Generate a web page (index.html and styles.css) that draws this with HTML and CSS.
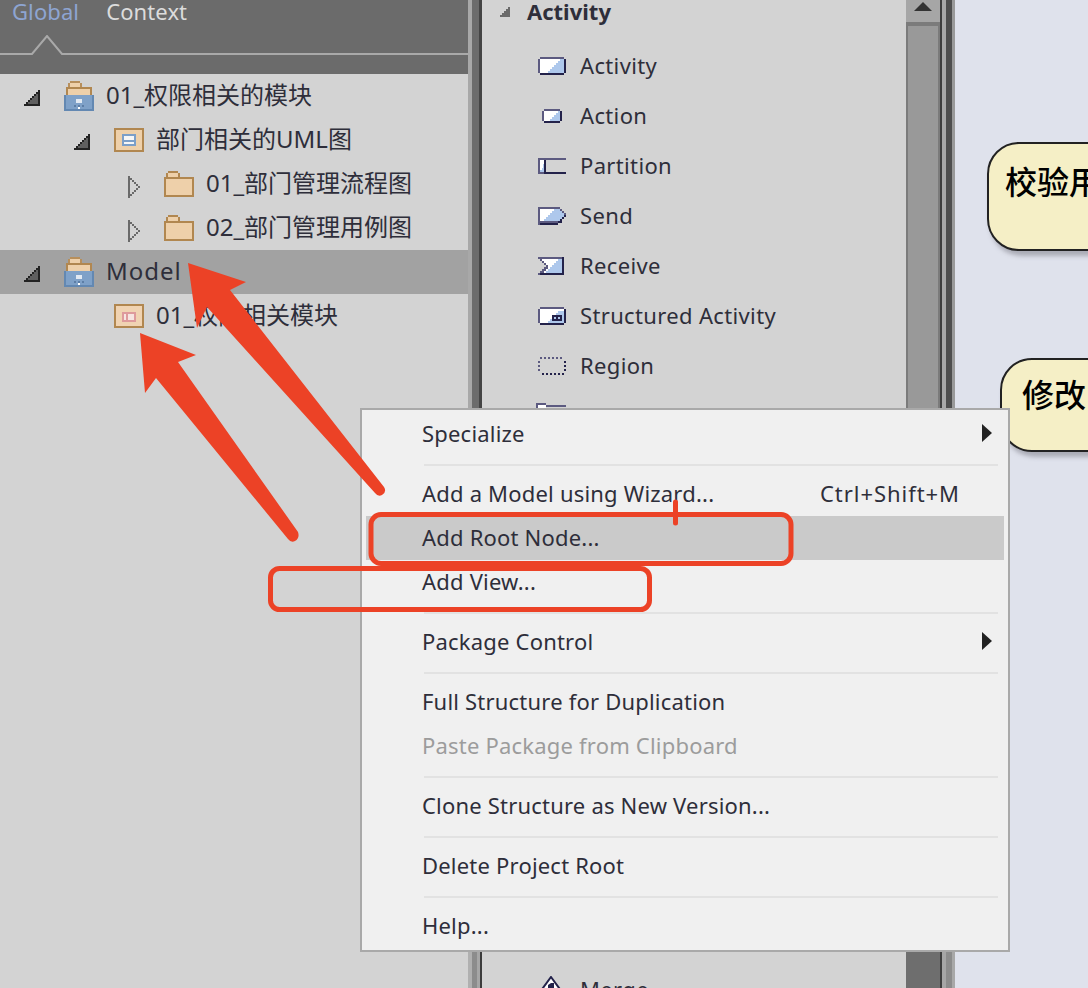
FILE: index.html
```html
<!DOCTYPE html>
<html lang="en">
<head>
    <meta charset="UTF-8">
    <title>Project Browser</title>
    <link rel="stylesheet" href="styles.css">
</head>
<body>
    <svg width="0" height="0" class="defs" aria-hidden="true">
        <symbol id="twisty-open" viewBox="0 0 16 16">
            <path d="M14 0h2v16H0v-2h2v-2h2v-2h2V8h2V6h2V4h2V2h2z" fill="#222"/>
            <path d="M14 4v10H4v-2h2v-2h2V8h2V6h2V4z" fill="#5f5f5f"/>
        </symbol>
        <symbol id="twisty-closed" viewBox="0 0 12 22">
            <path d="M0 0h2v2h2v2h2v2h2v2h2v2h2v2h-2v2H8v2H6v2H4v2H2v2H0zM2 4v14h2v-2h2v-2h2v-2h2v-2H8V8H6V6H4V4z" fill="#6a6a6a"/>
        </symbol>
        <symbol id="pkg" viewBox="0 0 30 30">
            <path d="M6 0h10v2h2v4H4V2h2z" fill="#b78f5c"/>
            <path d="M6 2h10v4H6z" fill="#eed0aa"/>
            <path d="M2 6h26v8H2z" fill="#b18750"/>
            <path d="M4 8h22v6H4z" fill="#eed0aa"/>
            <path d="M0 14h30v16H0z" fill="#6388b2"/>
            <path d="M2 14h26v14H2z" fill="#7fa1c8"/>
            <path d="M12 18h6v4h-6z" fill="#e2e9f2"/>
            <path d="M10 24h2v2h-2zM14 24h2v2h-2zM18 24h2v2h-2z" fill="#5d7ea6"/>
            <path d="M14 26h2v2h-2z" fill="#fff"/>
        </symbol>
        <symbol id="folder" viewBox="0 0 30 26">
            <path d="M4 0h10v2h2v4h14v20H0V6h2V2h2z" fill="#b18750"/>
            <path d="M4 2h10v4H4zM2 8h26v16H2z" fill="#eed0aa"/>
        </symbol>
        <symbol id="diagram" viewBox="0 0 30 24">
            <path d="M0 0h30v24H0z" fill="#b18750"/>
            <path d="M2 2h26v20H2z" fill="#eed0aa"/>
            <path d="M8 6h14v12H8z" fill="#7c9fc8"/>
            <path d="M10 8h10v4H10z" fill="#f6f6f6"/>
            <path d="M10 14h10v2H10z" fill="#f6f6f6"/>
        </symbol>
        <symbol id="view" viewBox="0 0 30 24">
            <path d="M0 0h30v24H0z" fill="#b18750"/>
            <path d="M2 2h26v20H2z" fill="#f0d3b2"/>
            <path d="M8 8h14v10H8z" fill="#de9a9c"/>
            <path d="M14 10h6v6h-6zM10 10h2v6h-2z" fill="#f6e4e0"/>
        </symbol>
    </svg>

    <div class="app">
        <aside class="browser">
            <div class="tabs">
                <div class="tab-row">
                    <span class="tab tab-active">Global</span>
                    <span class="tab">Context</span>
                </div>
                <svg class="tab-rule" width="468" height="22" viewBox="0 0 468 22">
                    <path d="M0 19H32L47 1L62 19H468" fill="none" stroke="#a9a9a9" stroke-width="2"/>
                </svg>
            </div>
            <ul class="tree">
                <li class="node lvl-0">
                    <svg class="twisty"><use href="#twisty-open"/></svg>
                    <svg class="ico ico-pkg"><use href="#pkg"/></svg>
                    <span class="label">01_权限相关的模块</span>
                </li>
                <li class="node lvl-1">
                    <svg class="twisty"><use href="#twisty-open"/></svg>
                    <svg class="ico ico-diagram"><use href="#diagram"/></svg>
                    <span class="label">部门相关的UML图</span>
                </li>
                <li class="node lvl-2">
                    <svg class="twisty twisty-closed"><use href="#twisty-closed"/></svg>
                    <svg class="ico ico-folder"><use href="#folder"/></svg>
                    <span class="label">01_部门管理流程图</span>
                </li>
                <li class="node lvl-2">
                    <svg class="twisty twisty-closed"><use href="#twisty-closed"/></svg>
                    <svg class="ico ico-folder"><use href="#folder"/></svg>
                    <span class="label">02_部门管理用例图</span>
                </li>
                <li class="node lvl-0 selected">
                    <svg class="twisty"><use href="#twisty-open"/></svg>
                    <svg class="ico ico-pkg"><use href="#pkg"/></svg>
                    <span class="label label-latin">Model</span>
                </li>
                <li class="node lvl-1">
                    <span class="twisty"></span>
                    <svg class="ico ico-diagram"><use href="#view"/></svg>
                    <span class="label">01_权限相关模块</span>
                </li>
            </ul>
        </aside>

        <div class="splitter">
            <div class="split-top"></div>
            <div class="split-bottom"></div>
        </div>

        <section class="toolbox">
            <div class="tool-head">
                <svg class="tool-tri" width="10" height="10" viewBox="0 0 10 10"><path d="M8 0h2v10H0V8h2V6h2V4h2V2h2z" fill="#6a6a6a"/></svg>
                <b>Activity</b>
            </div>
            <ul class="tools">
                <li>
                    <svg class="tool-ico" viewBox="0 0 28 18"><path d="M2 0h24v2h2v14h-2v2H2v-2H0V2h2z" fill="#5c5a80"/><path d="M2 16h24v2H2zM26 2h2v14h-2z" fill="#23224a"/><path d="M2 2h24v14H2z" fill="#fff"/><path d="M26 2v14H10v-2h2v-2h2v-2h2V8h2V6h2V4h2V2z" fill="#aec8ec"/></svg>
                    Activity
                </li>
                <li>
                    <svg class="tool-ico" viewBox="0 0 28 18"><path d="M6 2h16v2h2v10h-2v2H6v-2H4V4h2z" fill="#5c5a80"/><path d="M6 14h16v2H6zM22 4h2v10h-2z" fill="#23224a"/><path d="M6 4h16v10H6z" fill="#fff"/><path d="M22 4v10H12v-2h2v-2h2V8h2V6h2V4z" fill="#aec8ec"/></svg>
                    Action
                </li>
                <li>
                    <svg class="tool-ico" viewBox="0 0 28 18"><path d="M0 1h28v2H6v14H0z" fill="#5c5a80"/><path d="M6 15h22v2H6zM6 3h2v12H6z" fill="#23224a"/><path d="M2 3h4v12H2z" fill="#fff"/><path d="M6 7v8H2v-2h2v-2h1V7z" fill="#aec8ec"/></svg>
                    Partition
                </li>
                <li>
                    <svg class="tool-ico" viewBox="0 0 28 18"><path d="M0 0h22v2h2v2h2v2h2v4h-2v2h-2v2h-2v2h-2v2H0z" fill="#5c5a80"/><path d="M2 16h18v2H2zM22 12h2v4h-4v-2h2zM26 8h2v2h-2v2h-2v-2h2z" fill="#23224a"/><path d="M2 2h20v2h2v2h2v4h-2v2h-2v2H2z" fill="#fff"/><path d="M24 6h2v4h-2v2h-2v2H6v-2h2v-2h2V8h2V6h2V4h2V2h6v2h2z" fill="#aec8ec"/></svg>
                    Send
                </li>
                <li>
                    <svg class="tool-ico" viewBox="0 0 28 18"><path d="M0 0h26v18H0v-2h2v-2h2v-2h2v-2h2V8H6V6H4V4H2V2H0z" fill="#5c5a80"/><path d="M2 16h24v2H2zM24 0h2v18h-2z" fill="#23224a"/><path d="M4 2h20v14H6v-2h2v-2h2V8H8V6H6V4H4z" fill="#fff"/><path d="M24 2v14H8v-2h2v-2h2v-2h2V8h2V6h2V4h2V2z" fill="#aec8ec"/></svg>
                    Receive
                </li>
                <li>
                    <svg class="tool-ico" viewBox="0 0 28 18"><path d="M2 0h24v2h2v14h-2v2H2v-2H0V2h2z" fill="#5c5a80"/><path d="M2 16h24v2H2zM26 2h2v14h-2z" fill="#23224a"/><path d="M2 2h24v14H2z" fill="#fff"/><path d="M26 4v12H10v-2h2v-2h2v-2h2V8h2V6h2V4z" fill="#aec8ec"/><path d="M14 8h10v6H14z" fill="#23224a"/><path d="M16 10h2v2h-2zM20 10h2v2h-2z" fill="#aec8ec"/></svg>
                    Structured Activity
                </li>
                <li>
                    <svg class="tool-ico" viewBox="0 0 28 18"><path d="M2 0h2v2H2zM6 0h2v2H6zM10 0h2v2h-2zM14 0h2v2h-2zM18 0h2v2h-2zM22 0h2v2h-2zM0 4h2v2H0zM0 8h2v2H0zM0 12h2v2H0z" fill="#5c5a80"/><path d="M26 4h2v2h-2zM26 8h2v2h-2zM26 12h2v2h-2zM4 16h2v2H4zM8 16h2v2H8zM12 16h2v2h-2zM16 16h2v2h-2zM20 16h2v2h-2zM24 16h2v2h-2z" fill="#23224a"/></svg>
                    Region
                </li>
                <li>
                    <svg class="tool-ico" viewBox="0 0 28 18"><path d="M-2 -4h10v2h20v2H8v-2H0v4H-2z" fill="#5c5a80"/><path d="M0 -2h8v4H0z" fill="#fff"/></svg>
                    Exception
                </li>
                <li class="tool-merge">
                    <svg class="merge-ico" width="24" height="32" viewBox="0 0 24 32"><path d="M12 1L23 16L12 31L1 16z" fill="#fff" stroke="#23224a" stroke-width="2"/><path d="M12 7h3v6h-6V9z" fill="#23224a"/></svg>
                    Merge
                </li>
            </ul>
        </section>

        <div class="scrollbar">
            <div class="scroll-up"><svg width="18" height="9" viewBox="0 0 18 9"><path d="M9 0l9 9H0z" fill="#333"/></svg></div>
            <div class="scroll-thumb"></div>
        </div>
        <div class="splitter-right">
            <div class="split-top"></div>
            <div class="split-bottom"></div>
        </div>

        <main class="canvas">
            <div class="flow-node flow-check">校验用</div>
            <div class="flow-node flow-edit">修改</div>
        </main>
    </div>

    <div class="menu">
        <div class="item">Specialize<i class="sub"></i></div>
        <div class="sep"></div>
        <div class="item">Add a Model using Wizard...<span class="keys">Ctrl+Shift+M</span></div>
        <div class="item hover">Add Root Node...</div>
        <div class="item">Add View...</div>
        <div class="sep"></div>
        <div class="item">Package Control<i class="sub"></i></div>
        <div class="sep"></div>
        <div class="item">Full Structure for Duplication</div>
        <div class="item disabled">Paste Package from Clipboard</div>
        <div class="sep"></div>
        <div class="item">Clone Structure as New Version...</div>
        <div class="sep"></div>
        <div class="item">Delete Project Root</div>
        <div class="sep"></div>
        <div class="item">Help...</div>
    </div>

    <!-- red marks drawn over the screenshot -->
    <svg class="marks" width="1088" height="988" viewBox="0 0 1088 988">
        <path d="M188 263L246 282L230 290L384 487Q387 492 382 495Q378 497 375 493L207 307L197 328z" fill="#ec4226"/>
        <path d="M140 333L196 355L178 362L298 532Q300 538 295 541Q291 543 288 539L156 378L145 393z" fill="#ec4226"/>
        <rect x="371" y="514.5" width="420" height="49" rx="10" fill="none" stroke="#ec4226" stroke-width="5"/>
        <rect x="270.5" y="568.5" width="379" height="41" rx="9" fill="none" stroke="#ec4226" stroke-width="5"/>
        <path d="M675.5 502V523" stroke="#ec4226" stroke-width="5" stroke-linecap="round"/>
    </svg>
</body>
</html>
```

FILE: styles.css
```css
* {
    box-sizing: border-box;
}
html, body {
    margin: 0;
    height: 988px;
    overflow: hidden;
}
body {
    position: relative;
    font-family: "Noto Sans", "Noto Sans CJK SC", sans-serif;
    font-size: 22px;
    letter-spacing: 0.35px;
    color: #2e2e3a;
}
ul {
    list-style: none;
    margin: 0;
    padding: 0;
}
.defs {
    position: absolute;
}
.app {
    display: flex;
    height: 988px;
}

/* project browser */
.browser {
    width: 468px;
    flex: none;
    background: #d3d3d3;
}
.tabs {
    height: 74px;
    background: #6b6b6b;
}
.tab-row {
    display: flex;
    gap: 27px;
    height: 24px;
    padding-left: 12px;
    line-height: 22px;
    letter-spacing: 0.1px;
    color: #dcdcdc;
}
.tab-active {
    color: #8ea5d2;
}
.tab-rule {
    display: block;
    margin-top: 11px;
}
.node {
    display: flex;
    align-items: center;
    height: 44px;
}
.node.selected {
    background: #a2a2a2;
}
.lvl-0 { padding-left: 24px; }
.lvl-1 { padding-left: 74px; }
.lvl-2 { padding-left: 128px; }
.twisty {
    width: 16px;
    height: 16px;
    flex: none;
    margin-right: 24px;
    margin-top: 4px;
}
.twisty-closed {
    width: 12px;
    height: 22px;
    margin-right: 24px;
    margin-top: 6px;
}
.ico {
    flex: none;
    width: 30px;
    margin-right: 12px;
}
.ico-pkg { height: 30px; }
.ico-folder { height: 26px; }
.ico-diagram { height: 24px; }
.label {
    font-size: 24px;
    letter-spacing: 0;
    line-height: 32px;
    padding-bottom: 2px;
}
.label-latin {
    letter-spacing: 1px;
}

.splitter {
    width: 14px;
    flex: none;
    display: flex;
    flex-direction: column;
}
.split-top {
    flex: 1;
}
.split-bottom {
    height: 36px;
}
.splitter .split-top {
    background: linear-gradient(to right, #a8a8a8 4px, #6c6c6c 4px, #6c6c6c 11px, #444 11px);
}
.splitter .split-bottom {
    background: linear-gradient(to right, #b0b0b0 4px, #8c8c8c 4px, #8c8c8c 9px, #a6a6a6 9px, #a6a6a6 12px, #3c3c3c 12px);
}

/* toolbox */
.toolbox {
    width: 424px;
    flex: none;
    background: #d3d3d3;
    overflow: hidden;
}
.tool-head {
    display: flex;
    align-items: center;
    height: 24px;
    margin-bottom: 17px;
    padding-left: 18px;
    padding-bottom: 3px;
    letter-spacing: 0;
}
.tool-tri {
    margin-right: 17px;
    margin-top: 3px;
}
.tools li {
    display: flex;
    align-items: center;
    height: 50px;
    padding-left: 56px;
    padding-bottom: 2px;
}
.tool-ico {
    width: 28px;
    height: 18px;
    margin-right: 14px;
    margin-top: 2px;
    overflow: visible;
}
.tools .tool-merge {
    margin-top: 524px;
    padding-left: 57px;
}
.merge-ico {
    margin-right: 17px;
    margin-top: 6px;
}

.scrollbar {
    width: 36px;
    flex: none;
    background: #6e6e6e;
    border-right: 2px solid #3e3e3e;
}
.scroll-up {
    display: flex;
    justify-content: center;
    padding-top: 2px;
    height: 26px;
    background: #a6a6a6;
    border-bottom: 4px solid #7b7b7b;
}
.scroll-thumb {
    height: 600px;
    background: #999;
    border-left: 2px solid #7b7b7b;
    border-right: 2px solid #7b7b7b;
}
.splitter-right {
    width: 13px;
    flex: none;
    display: flex;
    flex-direction: column;
}
.splitter-right .split-top {
    background: linear-gradient(to right, #a8a8a8 4px, #4e4e4e 4px, #4e4e4e 10px, #999 10px);
}
.splitter-right .split-bottom {
    background: linear-gradient(to right, #a6a6a6 4px, #8c8c8c 4px, #8c8c8c 10px, #a8a8a8 10px);
}

/* diagram */
.canvas {
    flex: 1;
    position: relative;
    overflow: hidden;
    background: #dfe2ec;
}
.flow-node {
    position: absolute;
    width: 200px;
    font-family: "Noto Sans CJK SC", sans-serif;
    font-size: 32px;
    line-height: 40px;
    font-weight: 500;
    letter-spacing: 0;
    color: #000;
    background: #f5efc6;
    border: 2px solid #222;
    border-radius: 32px;
    box-shadow: 3px 5px 4px rgba(120, 120, 130, 0.5);
}
.flow-check {
    left: 32px;
    top: 142px;
    height: 109px;
    padding: 16px 0 0 16px;
}
.flow-edit {
    left: 45px;
    top: 358px;
    height: 94px;
    padding: 13px 0 0 20px;
}

/* context menu */
.menu {
    position: absolute;
    left: 360px;
    top: 408px;
    width: 650px;
    height: 544px;
    padding: 2px 10px 2px 4px;
    letter-spacing: 0.2px;
    background: #f0f0f0;
    border: 2px solid #a9a9a9;
}
.item {
    position: relative;
    display: flex;
    align-items: center;
    justify-content: space-between;
    height: 44px;
    padding: 0 38px 2px 56px;
}
.item.hover {
    background: #cacaca;
    margin-right: -6px;
}
.item.disabled {
    color: #9c9c9c;
}
.keys {
    margin-left: auto;
    letter-spacing: 0.95px;
}
.sub {
    position: absolute;
    right: 6px;
    top: 12px;
    width: 0;
    height: 0;
    border-left: 10px solid #222;
    border-top: 9px solid transparent;
    border-bottom: 9px solid transparent;
}
.sep {
    height: 16px;
    margin-left: 58px;
    padding-top: 8px;
}
.sep::before {
    content: "";
    display: block;
    height: 2px;
    background: #e2e2e2;
}

.marks {
    position: absolute;
    left: 0;
    top: 0;
}
```
